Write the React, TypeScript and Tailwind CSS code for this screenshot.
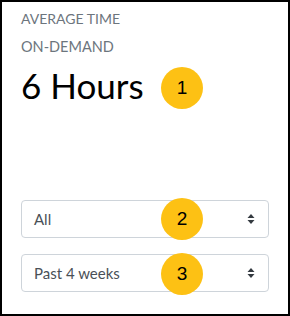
import React from "react";

const Badge = ({ n, className }: { n: number; className: string }) => (
  <div
    className={`absolute w-[42px] h-[42px] rounded-full bg-[#fdc114] flex items-center justify-center text-[19px] text-black font-['Liberation_Sans',Arial,sans-serif] ${className}`}
  >
    {n}
  </div>
);

const UpDown = () => (
  <svg width="8" height="12" viewBox="0 0 8 12" className="shrink-0">
    <path d="M4 1 L7.5 5 L0.5 5 Z" fill="#343a40" />
    <path d="M4 11 L7.5 7 L0.5 7 Z" fill="#343a40" />
  </svg>
);

const Select = ({ label }: { label: string }) => (
  <div className="h-[38px] w-full border border-[#ced4da] rounded-[4px] bg-white flex items-center justify-between pl-[12px] pr-[13px]">
    <span className="text-[15px] text-[#495057]">{label}</span>
    <UpDown />
  </div>
);

export default function App() {
  return (
    <div className="w-[290px] h-[316px] bg-white border-2 border-black relative font-['Lato',sans-serif] overflow-hidden">
      <div className="flex flex-col h-full px-[19px] pt-[7px]">
        <div className="text-[14px] leading-[20px] text-[#6c757d] uppercase">Average Time</div>
        <div className="text-[14.5px] leading-[20px] text-[#6c757d] uppercase mt-[8px]">On-Demand</div>
        <div className="text-[35px] leading-[44px] text-black mt-[6px]">6 Hours</div>
        <div className="mt-auto mb-[22px] flex flex-col gap-[16px]">
          <Select label="All" />
          <Select label="Past 4 weeks" />
        </div>
      </div>
      <Badge n={1} className="left-[159px] top-[65px]" />
      <Badge n={2} className="left-[159px] top-[196px]" />
      <Badge n={3} className="left-[159px] top-[251px]" />
    </div>
  );
}
